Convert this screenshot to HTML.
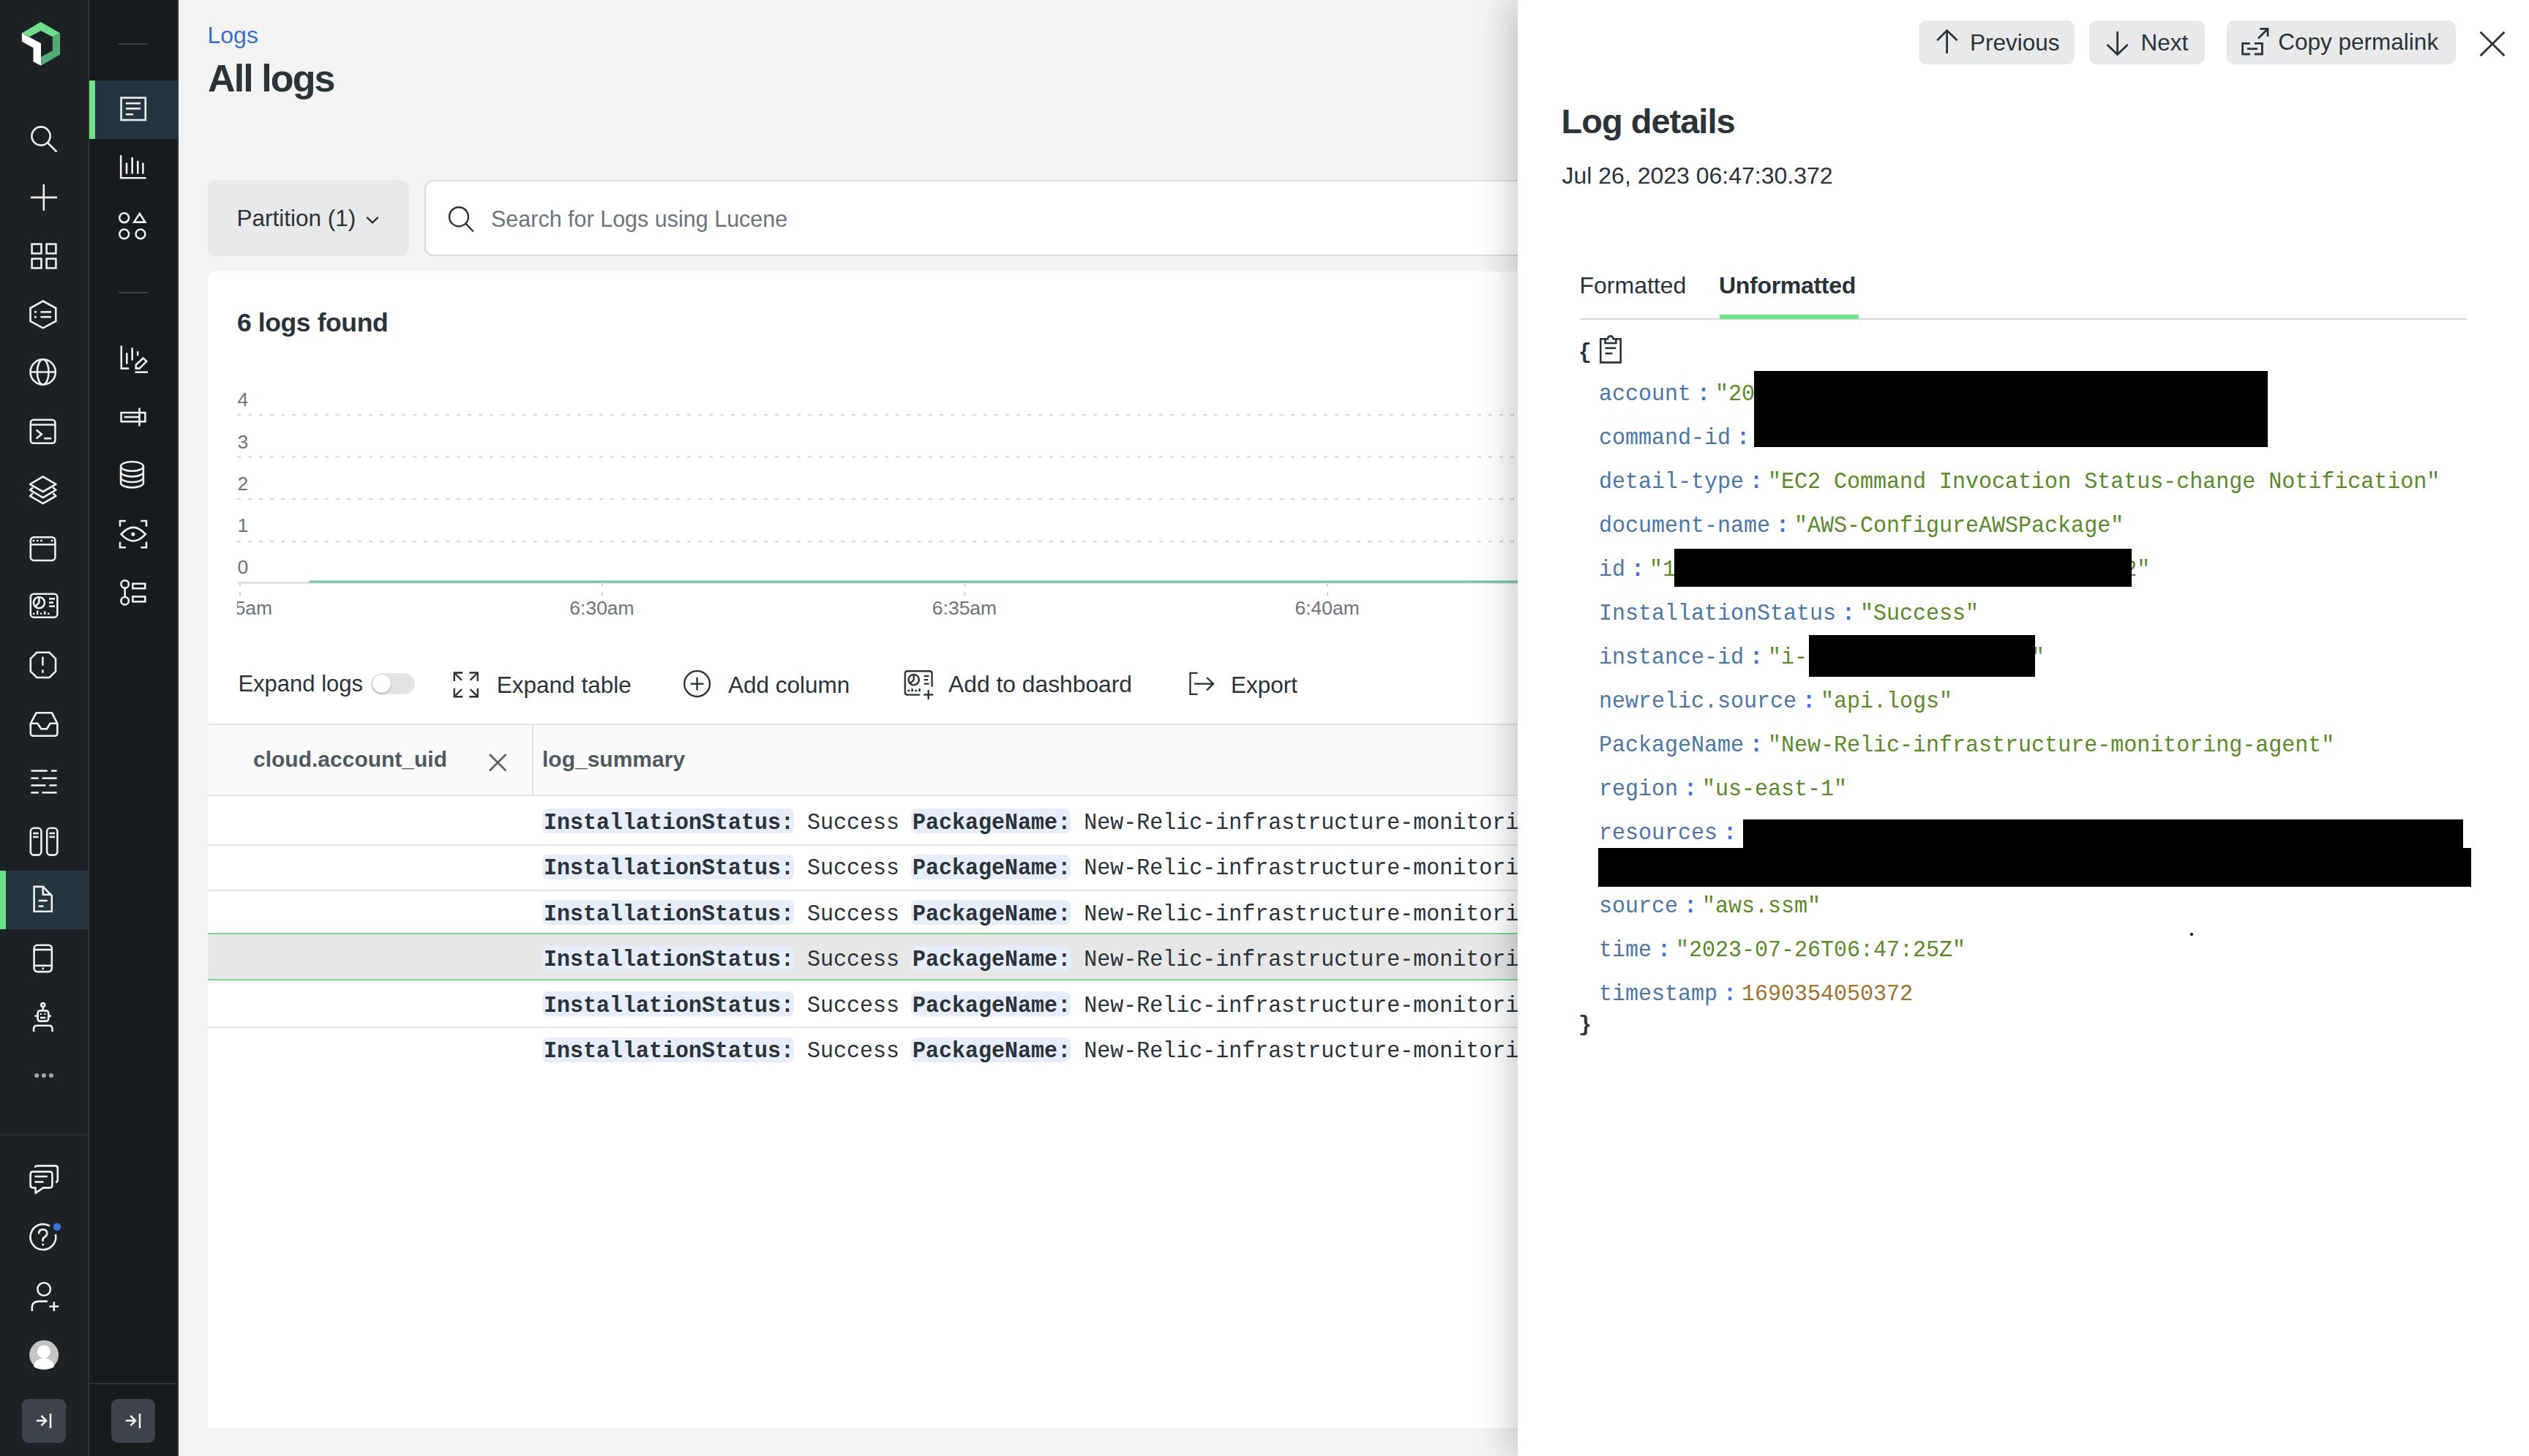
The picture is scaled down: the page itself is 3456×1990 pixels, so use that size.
<!DOCTYPE html><html><head><meta charset="utf-8"><style>
html,body{margin:0;padding:0;width:3456px;height:1990px;overflow:hidden;background:#f3f3f3;}
.t{position:absolute;white-space:pre;}
.r{position:absolute;}
.s{position:absolute;overflow:visible;}
</style></head><body>
<div class="r" style="left:0px;top:0px;width:120px;height:1990px;background:#1c2125;"></div>
<div class="r" style="left:120px;top:0px;width:2px;height:1990px;background:#2b3237;"></div>
<div class="r" style="left:122px;top:0px;width:122px;height:1990px;background:#171b1e;"></div>
<div class="r" style="left:242px;top:0px;width:2px;height:1990px;background:#2a3036;"></div>
<div class="r" style="left:0px;top:1190px;width:120px;height:80px;background:#243540;"></div>
<div class="r" style="left:0px;top:1190px;width:8px;height:80px;background:#70e08b;"></div>
<div class="r" style="left:122px;top:110px;width:122px;height:80px;background:#243540;"></div>
<div class="r" style="left:122px;top:110px;width:8px;height:80px;background:#70e08b;"></div>
<div class="r" style="left:0px;top:1550px;width:120px;height:2px;background:#2b3237;"></div>
<div class="r" style="left:122px;top:1890px;width:120px;height:2px;background:#2b3237;"></div>
<div class="r" style="left:162px;top:59px;width:40px;height:2px;background:#3a4146;"></div>
<div class="r" style="left:162px;top:399px;width:40px;height:2px;background:#3a4146;"></div>
<div class="r" style="left:30px;top:1912px;width:60px;height:60px;background:#3c434a;border-radius:9px;"></div>
<div class="r" style="left:152px;top:1912px;width:60px;height:60px;background:#3c434a;border-radius:9px;"></div>
<svg class="s" style="left:0px;top:0px;" width="244" height="1990" viewBox="0 0 244 1990"><polygon points="29.9,45.3 55.7,29.9 82.1,45.3 71.9,50.2 55.7,42 40.3,50.2" fill="#6fdd8b"/><polygon points="82.1,45.3 82.1,74.4 56,89.8 56,77.7 71.9,69.2 71.9,50.2" fill="#52ac72"/><polygon points="29.9,45.3 56,59.3 56,89.8 45.5,84.3 45.5,65.6 29.9,56.8" fill="#ffffff"/><g fill="none" stroke="#eeeeee" stroke-width="2.6"><circle cx="56" cy="186" r="12.6"/><line x1="65.5" y1="195.5" x2="77.5" y2="207.5"/></g><g fill="none" stroke="#eeeeee" stroke-width="2.6"><line x1="59.8" y1="252" x2="59.8" y2="288"/><line x1="42" y1="269.9" x2="78" y2="269.9"/></g><g fill="none" stroke="#eeeeee" stroke-width="2.6"><rect x="43.6" y="333.6" width="12.8" height="12.8"/><rect x="63.6" y="333.6" width="12.8" height="12.8"/><rect x="43.6" y="353.6" width="12.8" height="12.8"/><rect x="63.6" y="353.6" width="12.8" height="12.8"/></g><g fill="none" stroke="#eeeeee" stroke-width="2.6"><polygon points="58.7,411.5 76.3,421 76.3,439 58.7,448.3 41.5,439 41.5,421"/><line x1="55.4" y1="426.4" x2="70" y2="426.4"/><line x1="55.4" y1="433.2" x2="70" y2="433.2"/></g><g fill="#eeeeee"><rect x="47" y="425" width="2.8" height="2.8"/><rect x="47" y="431.8" width="2.8" height="2.8"/></g><g fill="none" stroke="#eeeeee" stroke-width="2.6"><circle cx="58.7" cy="508.5" r="17.2"/><ellipse cx="58.7" cy="508.5" rx="7.9" ry="17.2"/><line x1="41.5" y1="508.5" x2="75.9" y2="508.5"/></g><g fill="none" stroke="#eeeeee" stroke-width="2.6"><rect x="41.8" y="573.8" width="33.6" height="32" rx="4"/><line x1="41.8" y1="580.5" x2="75.4" y2="580.5"/><polyline points="49.6,587.6 56.8,593.4 49.6,599.4"/><line x1="60.2" y1="599.2" x2="70" y2="599.2"/></g><g fill="none" stroke="#eeeeee" stroke-width="2.6" stroke-width="2.8" stroke-linejoin="round"><polygon points="58.7,651.4 76.4,661.8 58.7,672 41,661.8"/><polyline points="45,666.2 41,669.7 58.7,680.2 76.4,669.7 72.4,666.2"/><polyline points="45,674.3 41,677.9 58.7,688.2 76.4,677.9 72.4,674.3"/></g><g fill="none" stroke="#eeeeee" stroke-width="2.6"><rect x="41.8" y="734.2" width="33.6" height="31.8" rx="4.5"/><line x1="41.8" y1="744.3" x2="75.4" y2="744.3"/></g><g fill="#eeeeee"><rect x="44.6" y="737.7" width="2.6" height="2.6"/><rect x="49.9" y="737.7" width="2.6" height="2.6"/><rect x="55.1" y="737.7" width="2.6" height="2.6"/><rect x="69.8" y="737.7" width="2.6" height="2.6"/></g><g fill="none" stroke="#eeeeee" stroke-width="2.6"><rect x="41.8" y="811.7" width="36.6" height="32" rx="4.5"/><circle cx="53.4" cy="823.6" r="7.6"/><polyline points="53.4,816 53.4,823.6 48.2,829"/><line x1="67" y1="818.3" x2="75" y2="818.3"/><line x1="67" y1="823.6" x2="73" y2="823.6"/><line x1="67" y1="828.6" x2="75" y2="828.6"/></g><g fill="#eeeeee"><rect x="45" y="837.5" width="2.4" height="2.4"/><rect x="50" y="834.5" width="2.4" height="5.4"/><rect x="55" y="837.5" width="2.4" height="2.4"/><rect x="60" y="835.5" width="2.4" height="4.4"/><rect x="65" y="837.5" width="2.4" height="2.4"/></g><g fill="none" stroke="#eeeeee" stroke-width="2.6"><polygon points="50.2,891.8 67.6,891.8 76,900.2 76,917.6 67.6,926 50.2,926 41.8,917.6 41.8,900.2"/><line x1="58.4" y1="897.6" x2="58.4" y2="909.6"/><line x1="58.4" y1="915.4" x2="58.4" y2="919.8"/></g><g fill="none" stroke="#eeeeee" stroke-width="2.6" stroke-linejoin="round"><path d="M41.8,988.8 L49.6,974.2 L70.8,974.2 L78.4,988.8 L78.4,1002 Q78.4,1005.8 74.6,1005.8 L45.6,1005.8 Q41.8,1005.8 41.8,1002 Z"/><polyline points="41.8,988.8 51.2,988.8 56.4,996.2 64,996.2 68.5,988.8 78.4,988.8"/></g><g fill="none" stroke="#eeeeee" stroke-width="2.6"><line x1="42.4" y1="1053.5" x2="64.8" y2="1053.5"/><line x1="70" y1="1053.5" x2="77.6" y2="1053.5"/><line x1="42.4" y1="1063.6" x2="52.7" y2="1063.6"/><line x1="57.5" y1="1063.6" x2="77.6" y2="1063.6"/><line x1="42.4" y1="1073.4" x2="62.5" y2="1073.4"/><line x1="67.5" y1="1073.4" x2="77.6" y2="1073.4"/><line x1="42.4" y1="1083.3" x2="52.7" y2="1083.3"/><line x1="57.5" y1="1083.3" x2="77.6" y2="1083.3"/></g><g fill="none" stroke="#eeeeee" stroke-width="2.6"><rect x="41.8" y="1131.8" width="14.6" height="36.8" rx="4.5"/><rect x="64.2" y="1131.8" width="14.2" height="36.8" rx="4.5"/><line x1="45.1" y1="1138.9" x2="52.7" y2="1138.9"/><line x1="45.1" y1="1143.9" x2="52.7" y2="1143.9"/><line x1="67.5" y1="1138.9" x2="75" y2="1138.9"/><line x1="67.5" y1="1143.9" x2="75" y2="1143.9"/></g><g fill="none" stroke="#eeeeee" stroke-width="2.6"><polygon points="46.6,1211.9 58.7,1211.9 70.8,1224.3 70.8,1245.8 46.6,1245.8"/><polyline points="58.7,1211.9 58.7,1222.8 70.8,1222.8"/><line x1="52.7" y1="1231" x2="64.8" y2="1231"/><line x1="52.7" y1="1238.6" x2="59.5" y2="1238.6"/></g><g fill="none" stroke="#eeeeee" stroke-width="2.6"><rect x="46.6" y="1291.7" width="24.2" height="36.4" rx="4.5"/><line x1="46.6" y1="1298" x2="70.8" y2="1298"/><line x1="46.6" y1="1319.8" x2="70.8" y2="1319.8"/></g><rect x="57.4" y="1322.4" width="2.6" height="2.6" fill="#eeeeee"/><g fill="none" stroke="#eeeeee" stroke-width="2.6" stroke-width="2.2"><circle cx="58.75" cy="1373.6" r="2.5"/><line x1="58.75" y1="1376.2" x2="58.75" y2="1380.4"/><rect x="51.6" y="1381.4" width="14.6" height="14.2" rx="3"/><line x1="47.5" y1="1388.6" x2="51.6" y2="1388.6"/><line x1="66.2" y1="1388.6" x2="70" y2="1388.6"/><path d="M46.1,1410 L46.1,1406 Q46.1,1401.8 50.3,1401.8 L67.2,1401.8 Q71.4,1401.8 71.4,1406 L71.4,1410"/><line x1="55" y1="1391" x2="62.3" y2="1391"/></g><g fill="#eeeeee"><rect x="54.8" y="1384.8" width="2.2" height="2.2"/><rect x="60.2" y="1384.8" width="2.2" height="2.2"/></g><g fill="#a3a8ab"><circle cx="50.1" cy="1470" r="3"/><circle cx="59.9" cy="1470" r="3"/><circle cx="70" cy="1470" r="3"/></g><g fill="none" stroke="#eeeeee" stroke-width="2.6" stroke-linejoin="round"><path d="M47.8,1595.8 Q48.4,1593.4 51.4,1593.4 L75.6,1593.4 Q78.8,1593.4 78.8,1596.6 L78.8,1612.8 Q78.8,1615.6 76,1616"/><path d="M45.2,1601.4 L67.8,1601.4 Q71.4,1601.4 71.4,1605 L71.4,1619.8 Q71.4,1623.4 67.8,1623.4 L59,1623.4 L48.6,1630.6 L48.6,1623.4 L45.2,1623.4 Q41.6,1623.4 41.6,1619.8 L41.6,1605 Q41.6,1601.4 45.2,1601.4 Z"/><line x1="47.4" y1="1608" x2="64.8" y2="1608"/><line x1="47.4" y1="1615.4" x2="59.5" y2="1615.4"/></g><g fill="none" stroke="#eeeeee" stroke-width="2.6"><path d="M75.9,1687 A17.4,17.4 0 1 1 67.9,1675.7"/><path d="M53,1686.4 Q53,1680.4 58.6,1680.4 Q64.2,1680.4 64.2,1685.8 Q64.2,1689.2 60.6,1691 Q58.4,1692.2 58.4,1695.2 L58.4,1697"/></g><rect x="57.3" y="1699.6" width="2.8" height="2.6" fill="#eeeeee"/><circle cx="78" cy="1676.7" r="5.2" fill="#3b74d8"/><g fill="none" stroke="#eeeeee" stroke-width="2.6"><circle cx="60.1" cy="1762" r="8.8"/><path d="M43.8,1792 L43.8,1786.4 Q43.8,1779 53.6,1778.6 L64.9,1778.6"/><line x1="73.8" y1="1779.2" x2="73.8" y2="1792"/><line x1="67.4" y1="1785.6" x2="80.2" y2="1785.6"/></g><circle cx="60.1" cy="1851.8" r="20" fill="#c4c4c4"/><circle cx="59.9" cy="1847.4" r="9" fill="#fff"/><path d="M46,1868 Q47,1856.4 60,1856.4 Q73,1856.4 74,1868 Q67.6,1871.8 60,1871.8 Q52.4,1871.8 46,1868 Z" fill="#fff"/><g fill="none" stroke="#eeeeee" stroke-width="2.6" stroke-width="2.2" transform="translate(0,0)"><line x1="49.8" y1="1941.7" x2="62.4" y2="1941.7"/><polyline points="56.4,1935 63,1941.7 56.4,1948.4"/><line x1="69" y1="1932" x2="69" y2="1952"/></g><g fill="none" stroke="#eeeeee" stroke-width="2.6" stroke-width="2.2" transform="translate(122,0)"><line x1="49.8" y1="1941.7" x2="62.4" y2="1941.7"/><polyline points="56.4,1935 63,1941.7 56.4,1948.4"/><line x1="69" y1="1932" x2="69" y2="1952"/></g><g fill="none" stroke="#eeeeee" stroke-width="2.6"><rect x="165.6" y="133.6" width="33.2" height="30.4"/><line x1="171.9" y1="141.2" x2="192" y2="141.2"/><line x1="171.9" y1="148.4" x2="192" y2="148.4"/><line x1="171.9" y1="156.3" x2="182" y2="156.3"/></g><g fill="none" stroke="#eeeeee" stroke-width="2.6"><polyline points="165.2,212.2 165.2,243.2 199.6,243.2"/><line x1="173" y1="222.5" x2="173" y2="237.6"/><line x1="180.7" y1="215" x2="180.7" y2="237.6"/><line x1="188.3" y1="219.8" x2="188.3" y2="237.6"/><line x1="195.4" y1="222.5" x2="195.4" y2="237.6"/></g><g fill="none" stroke="#eeeeee" stroke-width="2.6"><circle cx="169.7" cy="297.7" r="6.4"/><circle cx="169.7" cy="319.9" r="6.4"/><circle cx="192" cy="319.9" r="6.4"/><polygon points="190.8,292 198.4,303.6 183.2,303.6" stroke-linejoin="miter"/></g><g fill="none" stroke="#eeeeee" stroke-width="2.6"><polyline points="165.8,472.4 165.8,503.6 176.2,503.6"/><line x1="173.3" y1="482.4" x2="173.3" y2="497.6"/><line x1="180.7" y1="475.2" x2="180.7" y2="492.6"/><line x1="188.2" y1="480.2" x2="188.2" y2="486.2"/><polygon points="185.8,503.6 185.8,498.6 195.6,489.6 200.2,493.8 190.6,503.6"/><line x1="184.5" y1="508.7" x2="202" y2="508.7"/></g><g fill="none" stroke="#eeeeee" stroke-width="2.6"><rect x="165.6" y="564" width="32.8" height="12.2"/><line x1="190.5" y1="557.5" x2="190.5" y2="582.5"/><line x1="169.7" y1="570" x2="190.5" y2="570"/></g><g fill="none" stroke="#eeeeee" stroke-width="2.6"><ellipse cx="180.5" cy="637.4" rx="15.4" ry="6.4"/><path d="M165.1,637.4 L165.1,660 A15.4,6.4 0 0 0 195.9,660 L195.9,637.4"/><path d="M165.1,645 A15.4,6.4 0 0 0 195.9,645"/><path d="M165.1,652.6 A15.4,6.4 0 0 0 195.9,652.6"/></g><g fill="none" stroke="#eeeeee" stroke-width="2.6"><polyline points="164,719.7 164,712 172,712"/><polyline points="192.3,712 200,712 200,719.7"/><polyline points="164,740.5 164,748.2 172,748.2"/><polyline points="192.3,748.2 200,748.2 200,740.5"/><path d="M165.6,730.1 Q182.2,711.6 198.8,730.1 Q182.2,748.6 165.6,730.1 Z"/></g><circle cx="181.9" cy="730.1" r="2.6" fill="#eeeeee"/><g fill="none" stroke="#eeeeee" stroke-width="2.6"><circle cx="170.7" cy="798.4" r="5.2"/><circle cx="170.7" cy="821.2" r="5.2"/><line x1="170.7" y1="803.6" x2="170.7" y2="816"/><rect x="181.4" y="797.8" width="16.9" height="6.4"/><rect x="181.4" y="815.4" width="16.9" height="6.9"/></g></svg>
<div class="t" style="left:283.5px;top:32.2px;font-size:32px;line-height:32px;color:#3a70c9;font-weight:400;font-family:'Liberation Sans', sans-serif;letter-spacing:0px;">Logs</div>
<div class="t" style="left:284.0px;top:80.8px;font-size:52px;line-height:52px;color:#293338;font-weight:700;font-family:'Liberation Sans', sans-serif;letter-spacing:-1.9px;">All logs</div>
<div class="r" style="left:284px;top:246px;width:275px;height:104px;background:#e8e9ea;border-radius:12px;"></div>
<div class="t" style="left:323.5px;top:283.3px;font-size:31.5px;line-height:31.5px;color:#293338;font-weight:400;font-family:'Liberation Sans', sans-serif;letter-spacing:0px;">Partition (1)</div>
<svg class="s" style="left:0px;top:0px;" width="3456" height="1990" viewBox="0 0 3456 1990"><polyline points="501.3,296.8 509,304.4 516.7,296.8" fill="none" stroke="#293338" stroke-width="2.4"/></svg>
<div class="r" style="left:580px;top:246px;width:1600px;height:104px;background:#ffffff;border:2px solid #d9dbdd;border-radius:12px;box-sizing:border-box;"></div>
<svg class="s" style="left:0px;top:0px;" width="3456" height="1990" viewBox="0 0 3456 1990"><g fill="none" stroke="#293338" stroke-width="2.4"><circle cx="627" cy="296.3" r="13"/><line x1="636.4" y1="305.7" x2="647" y2="316.5"/></g></svg>
<div class="t" style="left:671.0px;top:284.2px;font-size:30.5px;line-height:30.5px;color:#6b7479;font-weight:400;font-family:'Liberation Sans', sans-serif;letter-spacing:0px;">Search for Logs using Lucene</div>
<div class="r" style="left:284px;top:371px;width:1900px;height:1581px;background:#ffffff;border-radius:12px 12px 0 0;"></div>
<div class="t" style="left:324.0px;top:423.9px;font-size:35.5px;line-height:35.5px;color:#293338;font-weight:700;font-family:'Liberation Sans', sans-serif;letter-spacing:-0.4px;">6 logs found</div>
<div class="t" style="left:324.5px;top:533.4px;font-size:26.5px;line-height:26.5px;color:#6b7479;font-weight:400;font-family:'Liberation Sans', sans-serif;letter-spacing:0px;">4</div>
<div class="t" style="left:324.5px;top:590.6px;font-size:26.5px;line-height:26.5px;color:#6b7479;font-weight:400;font-family:'Liberation Sans', sans-serif;letter-spacing:0px;">3</div>
<div class="t" style="left:324.5px;top:647.6px;font-size:26.5px;line-height:26.5px;color:#6b7479;font-weight:400;font-family:'Liberation Sans', sans-serif;letter-spacing:0px;">2</div>
<div class="t" style="left:324.5px;top:704.6px;font-size:26.5px;line-height:26.5px;color:#6b7479;font-weight:400;font-family:'Liberation Sans', sans-serif;letter-spacing:0px;">1</div>
<div class="t" style="left:324.5px;top:762.3px;font-size:26.5px;line-height:26.5px;color:#6b7479;font-weight:400;font-family:'Liberation Sans', sans-serif;letter-spacing:0px;">0</div>
<svg class="s" style="left:0px;top:0px;" width="3456" height="1990" viewBox="0 0 3456 1990"><line x1="324" y1="567" x2="2074" y2="567" stroke="#d6d6d6" stroke-width="2" stroke-dasharray="5 10"/><line x1="324" y1="624.5" x2="2074" y2="624.5" stroke="#d6d6d6" stroke-width="2" stroke-dasharray="5 10"/><line x1="324" y1="682" x2="2074" y2="682" stroke="#d6d6d6" stroke-width="2" stroke-dasharray="5 10"/><line x1="324" y1="740" x2="2074" y2="740" stroke="#d6d6d6" stroke-width="2" stroke-dasharray="5 10"/><line x1="324" y1="796.5" x2="2074" y2="796.5" stroke="#d4d4d4" stroke-width="2"/><line x1="422.7" y1="795" x2="2074" y2="795" stroke="#72c1b1" stroke-width="3.2"/><line x1="328" y1="798" x2="328" y2="801.5" stroke="#cfcfcf" stroke-width="2"/><line x1="328" y1="809.5" x2="328" y2="814" stroke="#cfcfcf" stroke-width="2"/><line x1="823" y1="798" x2="823" y2="801.5" stroke="#cfcfcf" stroke-width="2"/><line x1="823" y1="809.5" x2="823" y2="814" stroke="#cfcfcf" stroke-width="2"/><line x1="1318.5" y1="798" x2="1318.5" y2="801.5" stroke="#cfcfcf" stroke-width="2"/><line x1="1318.5" y1="809.5" x2="1318.5" y2="814" stroke="#cfcfcf" stroke-width="2"/><line x1="1814" y1="798" x2="1814" y2="801.5" stroke="#cfcfcf" stroke-width="2"/><line x1="1814" y1="809.5" x2="1814" y2="814" stroke="#cfcfcf" stroke-width="2"/></svg>
<div style="position:absolute;left:324px;top:800px;width:2000px;height:60px;overflow:hidden;">
<div class="t" style="left:-196px;width:400px;text-align:center;top:18.1px;font-size:26.5px;line-height:26.5px;color:#6b7479;font-family:'Liberation Sans', sans-serif;">6:25am</div>
<div class="t" style="left:298.5px;width:400px;text-align:center;top:18.1px;font-size:26.5px;line-height:26.5px;color:#6b7479;font-family:'Liberation Sans', sans-serif;">6:30am</div>
<div class="t" style="left:794px;width:400px;text-align:center;top:18.1px;font-size:26.5px;line-height:26.5px;color:#6b7479;font-family:'Liberation Sans', sans-serif;">6:35am</div>
<div class="t" style="left:1289.7px;width:400px;text-align:center;top:18.1px;font-size:26.5px;line-height:26.5px;color:#6b7479;font-family:'Liberation Sans', sans-serif;">6:40am</div>
</div>
<div class="t" style="left:325.4px;top:918.8px;font-size:31px;line-height:31px;color:#293338;font-weight:400;font-family:'Liberation Sans', sans-serif;letter-spacing:0px;">Expand logs</div>
<div class="r" style="left:507.4px;top:920.2px;width:59.3px;height:29.2px;background:#e3e4e6;border-radius:15px;"></div>
<div class="r" style="left:508.5px;top:921.9px;width:25.4px;height:25.4px;border-radius:50%;background:#fff;box-shadow:0 1.5px 3px rgba(0,0,0,0.28);"></div>
<svg class="s" style="left:0px;top:0px;" width="3456" height="1990" viewBox="0 0 3456 1990"><g fill="none" stroke="#293338" stroke-width="2.35"><polyline points="620.8,931 620.8,919.5 632.3,919.5"/><line x1="620.8" y1="919.5" x2="631" y2="929.7"/><polyline points="641.4,919.5 652.8,919.5 652.8,931"/><line x1="652.8" y1="919.5" x2="642.6" y2="929.7"/><polyline points="620.8,940.8 620.8,952.2 632.3,952.2"/><line x1="620.8" y1="952.2" x2="631" y2="942"/><polyline points="641.4,952.2 652.8,952.2 652.8,940.8"/><line x1="652.8" y1="952.2" x2="642.6" y2="942"/><circle cx="952.6" cy="934.6" r="17.4"/><line x1="943.7" y1="934.6" x2="961.5" y2="934.6"/><line x1="952.6" y1="925.7" x2="952.6" y2="943.5"/><path d="M1257.3,949.6 L1240,949.6 Q1236.8,949.6 1236.8,946.4 L1236.8,920.8 Q1236.8,917.2 1240.4,917.2 L1270,917.2 Q1273.6,917.2 1273.6,920.8 L1273.6,938.4"/><circle cx="1248.7" cy="929.1" r="7.2"/><polyline points="1248.7,921.9 1248.7,929.1 1244,934"/><line x1="1262.7" y1="924" x2="1269.5" y2="924"/><line x1="1262.7" y1="929.1" x2="1268" y2="929.1"/><line x1="1262.7" y1="934.6" x2="1269.5" y2="934.6"/><line x1="1268.7" y1="943" x2="1268.7" y2="956"/><line x1="1262.2" y1="949.5" x2="1275.2" y2="949.5"/><polyline points="1636.5,919.9 1626.5,919.9 1626.5,948.8 1636.5,948.8"/><line x1="1632" y1="934.6" x2="1658.6" y2="934.6"/><polyline points="1649.2,926 1658,934.6 1649.2,943.3"/></g><g fill="#293338"><rect x="1240.4" y="942.6" width="2.6" height="2.6"/><rect x="1245.3" y="941.2" width="2.6" height="4"/><rect x="1250.3" y="942.6" width="2.6" height="2.6"/><rect x="1255.3" y="941.2" width="2.6" height="4"/></g></svg>
<div class="t" style="left:678.8px;top:920.8px;font-size:31.5px;line-height:31.5px;color:#293338;font-weight:400;font-family:'Liberation Sans', sans-serif;letter-spacing:0px;">Expand table</div>
<div class="t" style="left:995.0px;top:920.7px;font-size:31.5px;line-height:31.5px;color:#293338;font-weight:400;font-family:'Liberation Sans', sans-serif;letter-spacing:0px;">Add column</div>
<div class="t" style="left:1296.0px;top:920.4px;font-size:31.8px;line-height:31.8px;color:#293338;font-weight:400;font-family:'Liberation Sans', sans-serif;letter-spacing:0px;">Add to dashboard</div>
<div class="t" style="left:1682.0px;top:920.6px;font-size:31.5px;line-height:31.5px;color:#293338;font-weight:400;font-family:'Liberation Sans', sans-serif;letter-spacing:0px;">Export</div>
<div class="r" style="left:284px;top:989px;width:1800px;height:2px;background:#e1e3e4;"></div>
<div class="r" style="left:284px;top:991px;width:1800px;height:95px;background:#fafafa;"></div>
<div class="r" style="left:284px;top:1086px;width:1800px;height:2px;background:#e1e3e4;"></div>
<div class="r" style="left:727px;top:991px;width:2px;height:95px;background:#e1e3e4;"></div>
<div class="t" style="left:346.0px;top:1023.2px;font-size:30px;line-height:30px;color:#4f5a60;font-weight:700;font-family:'Liberation Sans', sans-serif;letter-spacing:0px;">cloud.account_uid</div>
<svg class="s" style="left:0px;top:0px;" width="3456" height="1990" viewBox="0 0 3456 1990"><g stroke="#5b656a" stroke-width="2.8"><line x1="669" y1="1031" x2="691.5" y2="1053.5"/><line x1="691.5" y1="1031" x2="669" y2="1053.5"/></g></svg>
<div class="t" style="left:741.0px;top:1023.2px;font-size:30px;line-height:30px;color:#4f5a60;font-weight:700;font-family:'Liberation Sans', sans-serif;letter-spacing:0px;">log_summary</div>
<div class="r" style="left:284px;top:1153.5px;width:1800px;height:2px;background:#e3e4e5;"></div>
<div class="r" style="left:284px;top:1215.5px;width:1800px;height:2px;background:#e3e4e5;"></div>
<div class="r" style="left:284px;top:1402.8px;width:1800px;height:2px;background:#e3e4e5;"></div>
<div class="r" style="left:284px;top:1276px;width:1800px;height:63px;background:#e7e7e7;"></div>
<div class="r" style="left:284px;top:1275px;width:1800px;height:2px;background:#70e08b;"></div>
<div class="r" style="left:284px;top:1338px;width:1800px;height:2px;background:#70e08b;"></div>
<div class="r" style="left:741px;top:1105.4px;width:344px;height:34px;background:#e6edfb;border-radius:8px;"></div>
<div class="r" style="left:1245px;top:1105.4px;width:218px;height:34px;background:#e6edfb;border-radius:8px;"></div>
<div class="t" style="left:743px;top:1109.9px;font-size:30px;line-height:30px;font-family:'Liberation Mono', monospace;color:#293338;transform:scaleY(1.07);transform-origin:0 23px;"><b>InstallationStatus:</b> Success <b>PackageName:</b> New-Relic-infrastructure-monitoring-agent</div>
<div class="r" style="left:741px;top:1167.9px;width:344px;height:34px;background:#e6edfb;border-radius:8px;"></div>
<div class="r" style="left:1245px;top:1167.9px;width:218px;height:34px;background:#e6edfb;border-radius:8px;"></div>
<div class="t" style="left:743px;top:1172.4px;font-size:30px;line-height:30px;font-family:'Liberation Mono', monospace;color:#293338;transform:scaleY(1.07);transform-origin:0 23px;"><b>InstallationStatus:</b> Success <b>PackageName:</b> New-Relic-infrastructure-monitoring-agent</div>
<div class="r" style="left:741px;top:1230.4px;width:344px;height:34px;background:#e6edfb;border-radius:8px;"></div>
<div class="r" style="left:1245px;top:1230.4px;width:218px;height:34px;background:#e6edfb;border-radius:8px;"></div>
<div class="t" style="left:743px;top:1234.9px;font-size:30px;line-height:30px;font-family:'Liberation Mono', monospace;color:#293338;transform:scaleY(1.07);transform-origin:0 23px;"><b>InstallationStatus:</b> Success <b>PackageName:</b> New-Relic-infrastructure-monitoring-agent</div>
<div class="r" style="left:741px;top:1292.9px;width:344px;height:34px;background:#e6edfb;border-radius:8px;"></div>
<div class="r" style="left:1245px;top:1292.9px;width:218px;height:34px;background:#e6edfb;border-radius:8px;"></div>
<div class="t" style="left:743px;top:1297.4px;font-size:30px;line-height:30px;font-family:'Liberation Mono', monospace;color:#293338;transform:scaleY(1.07);transform-origin:0 23px;"><b>InstallationStatus:</b> Success <b>PackageName:</b> New-Relic-infrastructure-monitoring-agent</div>
<div class="r" style="left:741px;top:1355.4px;width:344px;height:34px;background:#e6edfb;border-radius:8px;"></div>
<div class="r" style="left:1245px;top:1355.4px;width:218px;height:34px;background:#e6edfb;border-radius:8px;"></div>
<div class="t" style="left:743px;top:1359.9px;font-size:30px;line-height:30px;font-family:'Liberation Mono', monospace;color:#293338;transform:scaleY(1.07);transform-origin:0 23px;"><b>InstallationStatus:</b> Success <b>PackageName:</b> New-Relic-infrastructure-monitoring-agent</div>
<div class="r" style="left:741px;top:1417.9px;width:344px;height:34px;background:#e6edfb;border-radius:8px;"></div>
<div class="r" style="left:1245px;top:1417.9px;width:218px;height:34px;background:#e6edfb;border-radius:8px;"></div>
<div class="t" style="left:743px;top:1422.4px;font-size:30px;line-height:30px;font-family:'Liberation Mono', monospace;color:#293338;transform:scaleY(1.07);transform-origin:0 23px;"><b>InstallationStatus:</b> Success <b>PackageName:</b> New-Relic-infrastructure-monitoring-agent</div>
<div class="r" style="left:2074px;top:0;width:1382px;height:1990px;background:#fff;box-shadow:-4px 0 48px rgba(0,0,0,0.26);"></div>
<div class="r" style="left:2622px;top:28px;width:213px;height:60px;background:#e8e9ea;border-radius:10px;"></div>
<div class="r" style="left:2855px;top:28px;width:158px;height:60px;background:#e8e9ea;border-radius:10px;"></div>
<div class="r" style="left:3043px;top:28px;width:313px;height:60px;background:#e8e9ea;border-radius:10px;"></div>
<svg class="s" style="left:0px;top:0px;" width="3456" height="1990" viewBox="0 0 3456 1990"><g fill="none" stroke="#293338" stroke-width="2.8"><line x1="2660.6" y1="41" x2="2660.6" y2="73"/><polyline points="2647.2,55.2 2660.6,41.6 2674.6,55.2"/><line x1="2893.6" y1="43" x2="2893.6" y2="75"/><polyline points="2879.6,61 2893.6,74.6 2907.6,61"/><polyline points="3074.8,59.4 3064.6,59.4 3064.6,74 3074.8,74"/><polyline points="3080.8,59.4 3091.4,59.4 3091.4,74 3080.8,74"/><line x1="3070.8" y1="66.7" x2="3085" y2="66.7"/><line x1="3085.9" y1="52.4" x2="3099" y2="39.4"/><polyline points="3088.2,39.4 3099,39.4 3099,50"/><line x1="3389.6" y1="43.8" x2="3422.4" y2="76.2"/><line x1="3422.4" y1="43.8" x2="3389.6" y2="76.2"/></g></svg>
<div class="t" style="left:2692.0px;top:43.1px;font-size:31.5px;line-height:31.5px;color:#293338;font-weight:400;font-family:'Liberation Sans', sans-serif;letter-spacing:0px;">Previous</div>
<div class="t" style="left:2925.5px;top:43.1px;font-size:31.5px;line-height:31.5px;color:#293338;font-weight:400;font-family:'Liberation Sans', sans-serif;letter-spacing:0px;">Next</div>
<div class="t" style="left:3113.3px;top:42.3px;font-size:31.5px;line-height:31.5px;color:#293338;font-weight:400;font-family:'Liberation Sans', sans-serif;letter-spacing:0px;">Copy permalink</div>
<div class="t" style="left:2133.5px;top:142.2px;font-size:47px;line-height:47px;color:#293338;font-weight:700;font-family:'Liberation Sans', sans-serif;letter-spacing:-1.0px;">Log details</div>
<div class="t" style="left:2134.5px;top:224.4px;font-size:32px;line-height:32px;color:#293338;font-weight:400;font-family:'Liberation Sans', sans-serif;letter-spacing:0px;">Jul 26, 2023 06:47:30.372</div>
<div class="t" style="left:2158.5px;top:373.9px;font-size:32px;line-height:32px;color:#293338;font-weight:400;font-family:'Liberation Sans', sans-serif;letter-spacing:0px;">Formatted</div>
<div class="t" style="left:2349.0px;top:373.9px;font-size:32px;line-height:32px;color:#293338;font-weight:700;font-family:'Liberation Sans', sans-serif;letter-spacing:-0.3px;">Unformatted</div>
<div class="r" style="left:2159px;top:435px;width:1212px;height:2px;background:#d5d7d9;"></div>
<div class="r" style="left:2350px;top:430px;width:190px;height:6px;background:#70e08b;"></div>
<div class="t" style="left:2157.0px;top:467.0px;font-size:30px;line-height:30px;color:#293338;font-weight:700;font-family:'Liberation Mono', monospace;letter-spacing:0px;">{</div>
<svg class="s" style="left:0px;top:0px;" width="3456" height="1990" viewBox="0 0 3456 1990"><g fill="none" stroke="#293338" stroke-width="2.6"><polyline points="2193.6,463.2 2187.3,463.2 2187.3,495.4 2214.7,495.4 2214.7,463.2 2208.4,463.2"/><path d="M2193.6,463.2 L2193.6,469 L2208.4,469 L2208.4,463.2 L2204.6,463.2 A3.8,3.8 0 0 0 2197,463.2 Z"/><line x1="2193.6" y1="475.8" x2="2208.4" y2="475.8"/><line x1="2193.6" y1="483.1" x2="2203.4" y2="483.1"/></g></svg>
<div class="t" style="left:2185px;top:523.6px;font-size:30px;line-height:30px;font-family:'Liberation Mono', monospace;transform:scaleY(1.07);transform-origin:0 23px;"><span style="color:#4a76a8">account</span><span style="color:#3b74d8;font-weight:700;margin:0 7px 0 8px;">:</span><span style="color:#5a8a2a">"20xxxxxxxxxxxxxxx"</span></div>
<div class="t" style="left:2185px;top:583.6px;font-size:30px;line-height:30px;font-family:'Liberation Mono', monospace;transform:scaleY(1.07);transform-origin:0 23px;"><span style="color:#4a76a8">command-id</span><span style="color:#3b74d8;font-weight:700;margin:0 7px 0 8px;">:</span><span style="color:#5a8a2a">"xxxxxxxxxxxxxxxxxxxxxxxxxxxx"</span></div>
<div class="t" style="left:2185px;top:643.6px;font-size:30px;line-height:30px;font-family:'Liberation Mono', monospace;transform:scaleY(1.07);transform-origin:0 23px;"><span style="color:#4a76a8">detail-type</span><span style="color:#3b74d8;font-weight:700;margin:0 7px 0 8px;">:</span><span style="color:#5a8a2a">"EC2 Command Invocation Status-change Notification"</span></div>
<div class="t" style="left:2185px;top:703.6px;font-size:30px;line-height:30px;font-family:'Liberation Mono', monospace;transform:scaleY(1.07);transform-origin:0 23px;"><span style="color:#4a76a8">document-name</span><span style="color:#3b74d8;font-weight:700;margin:0 7px 0 8px;">:</span><span style="color:#5a8a2a">"AWS-ConfigureAWSPackage"</span></div>
<div class="t" style="left:2185px;top:763.6px;font-size:30px;line-height:30px;font-family:'Liberation Mono', monospace;transform:scaleY(1.07);transform-origin:0 23px;"><span style="color:#4a76a8">id</span><span style="color:#3b74d8;font-weight:700;margin:0 7px 0 8px;">:</span><span style="color:#5a8a2a">"1xxxxxxxxxxxxxxxxxxxxxxxxxxxxxxxxxx2"</span></div>
<div class="t" style="left:2185px;top:823.6px;font-size:30px;line-height:30px;font-family:'Liberation Mono', monospace;transform:scaleY(1.07);transform-origin:0 23px;"><span style="color:#4a76a8">InstallationStatus</span><span style="color:#3b74d8;font-weight:700;margin:0 7px 0 8px;">:</span><span style="color:#5a8a2a">"Success"</span></div>
<div class="t" style="left:2185px;top:883.6px;font-size:30px;line-height:30px;font-family:'Liberation Mono', monospace;transform:scaleY(1.07);transform-origin:0 23px;"><span style="color:#4a76a8">instance-id</span><span style="color:#3b74d8;font-weight:700;margin:0 7px 0 8px;">:</span><span style="color:#5a8a2a">"i-xxxxxxxxxxxxxxxxx"</span></div>
<div class="t" style="left:2185px;top:943.6px;font-size:30px;line-height:30px;font-family:'Liberation Mono', monospace;transform:scaleY(1.07);transform-origin:0 23px;"><span style="color:#4a76a8">newrelic.source</span><span style="color:#3b74d8;font-weight:700;margin:0 7px 0 8px;">:</span><span style="color:#5a8a2a">"api.logs"</span></div>
<div class="t" style="left:2185px;top:1003.6px;font-size:30px;line-height:30px;font-family:'Liberation Mono', monospace;transform:scaleY(1.07);transform-origin:0 23px;"><span style="color:#4a76a8">PackageName</span><span style="color:#3b74d8;font-weight:700;margin:0 7px 0 8px;">:</span><span style="color:#5a8a2a">"New-Relic-infrastructure-monitoring-agent"</span></div>
<div class="t" style="left:2185px;top:1063.6px;font-size:30px;line-height:30px;font-family:'Liberation Mono', monospace;transform:scaleY(1.07);transform-origin:0 23px;"><span style="color:#4a76a8">region</span><span style="color:#3b74d8;font-weight:700;margin:0 7px 0 8px;">:</span><span style="color:#5a8a2a">"us-east-1"</span></div>
<div class="t" style="left:2185px;top:1123.6px;font-size:30px;line-height:30px;font-family:'Liberation Mono', monospace;transform:scaleY(1.07);transform-origin:0 23px;"><span style="color:#4a76a8">resources</span><span style="color:#3b74d8;font-weight:700;margin:0 7px 0 8px;">:</span><span style="color:#5a8a2a"></span></div>
<div class="t" style="left:2185px;top:1223.6px;font-size:30px;line-height:30px;font-family:'Liberation Mono', monospace;transform:scaleY(1.07);transform-origin:0 23px;"><span style="color:#4a76a8">source</span><span style="color:#3b74d8;font-weight:700;margin:0 7px 0 8px;">:</span><span style="color:#5a8a2a">"aws.ssm"</span></div>
<div class="t" style="left:2185px;top:1283.6px;font-size:30px;line-height:30px;font-family:'Liberation Mono', monospace;transform:scaleY(1.07);transform-origin:0 23px;"><span style="color:#4a76a8">time</span><span style="color:#3b74d8;font-weight:700;margin:0 7px 0 8px;">:</span><span style="color:#5a8a2a">"2023-07-26T06:47:25Z"</span></div>
<div class="t" style="left:2185px;top:1343.6px;font-size:30px;line-height:30px;font-family:'Liberation Mono', monospace;transform:scaleY(1.07);transform-origin:0 23px;"><span style="color:#4a76a8">timestamp</span><span style="color:#3b74d8;font-weight:700;margin:0 7px 0 8px;">:</span><span style="color:#a4702e">1690354050372</span></div>
<div class="t" style="left:2157.0px;top:1385.8px;font-size:30px;line-height:30px;color:#293338;font-weight:700;font-family:'Liberation Mono', monospace;letter-spacing:0px;">}</div>
<div class="r" style="left:2396.7px;top:507px;width:702.3px;height:104.3px;background:#000;"></div>
<div class="r" style="left:2287.7px;top:749.8px;width:625.1px;height:52.4px;background:#000;"></div>
<div class="r" style="left:2471.7px;top:868.2px;width:309.1px;height:56.8px;background:#000;"></div>
<div class="r" style="left:2382.3px;top:1120px;width:983.6px;height:39.5px;background:#000;"></div>
<div class="r" style="left:2183.8px;top:1159px;width:1193px;height:53px;background:#000;"></div>
<div class="r" style="left:2993px;top:1275px;width:4px;height:4px;background:#000;border-radius:50%;"></div>
</body></html>
